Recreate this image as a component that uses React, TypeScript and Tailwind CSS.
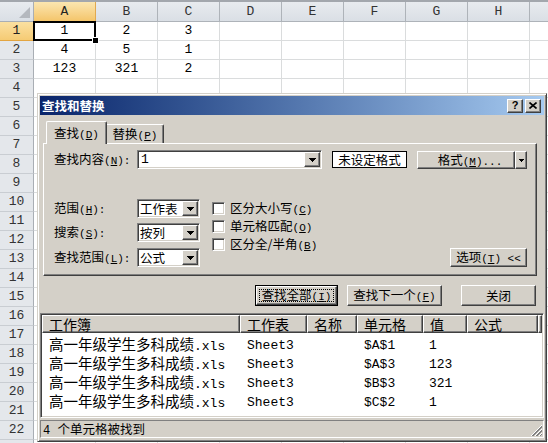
import React from 'react';

const COLS = ['A', 'B', 'C', 'D', 'E', 'F', 'G', 'H', 'I'];
const DATA: Record<number, string[]> = { 1: ['1', '2', '3'], 2: ['4', '5', '1'], 3: ['123', '321', '2'] };

const RAISED =
  'bg-[#d4d0c8] border border-t-white border-l-white border-r-[#404040] border-b-[#404040] shadow-[inset_-1px_-1px_0_#808080]';
const SUNKEN =
  'border border-t-[#808080] border-l-[#808080] border-r-white border-b-white shadow-[inset_1px_1px_0_#404040,inset_-1px_-1px_0_#d4d0c8]';
const ZH = "font-['Noto_Sans_CJK_SC',sans-serif]";
const MONO = "font-['Liberation_Mono','Noto_Sans_CJK_SC',monospace]";

const CJKRE = /([\u2E80-\u9FFF\uFF00-\uFFEF\u3000-\u303F]+)/;

function Mix({ text, c, l }: { text: string; c: string; l: string }) {
  const parts = text.split(CJKRE).filter((p) => p !== '');
  return (
    <span className="whitespace-pre">
      {parts.map((p, i) => (
        <span key={i} className={CJKRE.test(p) ? c : l}>
          {p}
        </span>
      ))}
    </span>
  );
}

function Mn({ zh, k, tail = '' }: { zh: string; k: string; tail?: string }) {
  return (
    <span className="whitespace-pre">
      <span className={`${ZH} text-[12.5px]`}>{zh}</span>
      <span className={`${MONO} text-[11px]`}>
        (<span className="underline underline-offset-1">{k}</span>){tail}
      </span>
    </span>
  );
}

function Arrow() {
  return (
    <svg width="7" height="4" viewBox="0 0 7 4" shapeRendering="crispEdges">
      <rect x="0" y="0" width="7" height="1" fill="#000" />
      <rect x="1" y="1" width="5" height="1" fill="#000" />
      <rect x="2" y="2" width="3" height="1" fill="#000" />
      <rect x="3" y="3" width="1" height="1" fill="#000" />
    </svg>
  );
}

function Select({ text }: { text: string }) {
  return (
    <div className={`${SUNKEN} bg-white w-[63px] h-[19px] flex p-[1px]`}>
      <div className={`${ZH} flex-1 min-w-0 text-[12.5px] leading-[15px] pl-[1px] whitespace-nowrap`}>{text}</div>
      <div className={`${RAISED} w-[16px] shrink-0 flex items-center justify-center`}>
        <Arrow />
      </div>
    </div>
  );
}

function Check({ zh, k }: { zh: string; k: string }) {
  return (
    <div className="flex items-center h-[18px]">
      <div className={`${SUNKEN} bg-white w-[13px] h-[13px] shrink-0`} />
      <span className="ml-[5px]">
        <Mn zh={zh} k={k} />
      </span>
    </div>
  );
}

const HEAD = [
  { t: '工作簿', w: 'w-[198px]' },
  { t: '工作表', w: 'w-[67px]' },
  { t: '名称', w: 'w-[50px]' },
  { t: '单元格', w: 'w-[66px]' },
  { t: '值', w: 'w-[44px]' },
  { t: '公式', w: 'w-[71px]' },
];

const RESULTS = [
  ['$A$1', '1'],
  ['$A$3', '123'],
  ['$B$3', '321'],
  ['$C$2', '1'],
];

export default function App() {
  const rows = Array.from({ length: 23 }, (_, i) => i + 1);
  return (
    <div className="relative w-[548px] h-[443px] overflow-hidden bg-white select-none">
      {/* Spreadsheet */}
      <div className={`${MONO} text-[13px] text-black`}>
        <div className="flex h-[22px] border-t-2 border-t-[#a3a7ad] bg-[#dfe3e8]">
          <div className="relative w-[34px] shrink-0 h-full border-r border-b border-[#a9aeb4] bg-linear-to-b from-[#e8ebef] to-[#dadfe5]">
            <svg className="absolute right-[2px] bottom-[2px]" width="12" height="12">
              <polygon points="11,0 11,11 0,11" fill="#b4b8be" />
            </svg>
          </div>
          {COLS.map((c) => (
            <div
              key={c}
              className={
                c === 'A'
                  ? 'w-[62px] shrink-0 h-full flex items-center justify-center border-r border-b border-r-[#e1a94f] border-b-[#e3a541] bg-linear-to-b from-[#fbe6b0] to-[#f4c56a] text-[#222]'
                  : 'w-[62px] shrink-0 h-full flex items-center justify-center border-r border-b border-[#aeb3b9] bg-linear-to-b from-[#e8ebef] to-[#dadfe5] text-[#333]'
              }
            >
              {c === 'I' ? '' : c}
            </div>
          ))}
        </div>
        {rows.map((r) => (
          <div key={r} className="flex h-[19px]">
            <div
              className={
                r === 1
                  ? 'w-[34px] shrink-0 h-full flex items-center justify-center border-r border-b border-r-[#e1a94f] border-b-[#e3a541] bg-linear-to-b from-[#fbe0a0] to-[#f5cb74] text-[#222]'
                  : 'w-[34px] shrink-0 h-full flex items-center justify-center border-r border-b border-r-[#a9aeb4] border-b-[#c9cdd2] bg-[#e4e7eb] text-[#333]'
              }
            >
              {r <= 22 ? r : ''}
            </div>
            {COLS.map((c, ci) => (
              <div
                key={c}
                className="w-[62px] shrink-0 h-full flex items-center justify-center border-r border-b border-[#dadcdd]"
              >
                {DATA[r]?.[ci] ?? ''}
              </div>
            ))}
          </div>
        ))}
      </div>
      {/* Active cell */}
      <div className="absolute left-[33px] top-[21px] w-[63px] h-[20px] border-2 border-black" />
      <div className="absolute left-[92px] top-[37px] w-[7px] h-[7px] bg-black border border-white" />

      {/* Dialog */}
      <div className="absolute left-[37px] top-[93px] w-[510px] h-[349px] bg-[#d4d0c8] border border-t-[#d4d0c8] border-l-[#d4d0c8] border-r-[#404040] border-b-[#404040] shadow-[inset_1px_1px_0_#fff,inset_-1px_-1px_0_#808080] p-[2px] flex flex-col text-black leading-[16px]">
        {/* Title bar */}
        <div className="h-[19px] shrink-0 flex items-center bg-linear-to-r from-[#0a246a] to-[#a6caf0] pl-[2px] pr-[3px]">
          <span className={`${ZH} text-[12.5px] font-bold text-white`}>查找和替换</span>
          <div className="ml-auto flex gap-[2px]">
            <div className={`${RAISED} w-[16px] h-[14px] flex items-center justify-center`}>
              <span className="font-['Liberation_Sans',sans-serif] font-bold text-[11px] leading-none">?</span>
            </div>
            <div className={`${RAISED} w-[16px] h-[14px] flex items-center justify-center`}>
              <svg width="8" height="7" viewBox="0 0 8 7">
                <path d="M0.5 0.5L7.5 6.5M7.5 0.5L0.5 6.5" stroke="#000" strokeWidth="1.6" />
              </svg>
            </div>
          </div>
        </div>

        {/* Tabs */}
        <div className="mt-[6px] ml-[3px] w-[494px] h-[22px] flex items-end pl-[3px]">
          <div className="relative z-10 -mb-px w-[61px] h-[23px] bg-[#d4d0c8] border-t border-l border-r border-t-white border-l-white border-r-[#404040] rounded-t-[2px] shadow-[inset_-1px_0_0_#808080] flex items-center justify-center">
            <Mn zh="查找" k="D" />
          </div>
          <div className="w-[57px] h-[19px] bg-[#d4d0c8] border-t border-r border-t-white border-r-[#404040] rounded-tr-[2px] shadow-[inset_-1px_0_0_#808080] flex items-center justify-center">
            <Mn zh="替换" k="P" />
          </div>
        </div>

        {/* Panel */}
        <div className="ml-[3px] w-[494px] h-[133px] shrink-0 border border-t-white border-l-white border-r-[#404040] border-b-[#404040] shadow-[inset_-1px_-1px_0_#808080] pl-[10px] pr-[9px] pt-[6px] flex flex-col">
          <div className="flex items-start h-[19px]">
            <div className="w-[83px] h-[19px] flex items-center">
              <Mn zh="查找内容" k="N" tail=":" />
            </div>
            <div className={`${SUNKEN} bg-white w-[185px] h-[19px] flex p-[1px]`}>
              <div className={`${MONO} flex-1 text-[13px] leading-[15px] pl-[2px]`}>1</div>
              <div className={`${RAISED} w-[16px] flex items-center justify-center`}>
                <Arrow />
              </div>
            </div>
            <div className={`${ZH} ml-[10px] mt-[1px] w-[75px] h-[17px] border border-black bg-white flex items-center justify-center text-[12.5px]`}>
              未设定格式
            </div>
            <div className="ml-[10px] mt-[1px] flex h-[18px]">
              <div className={`${RAISED} w-[98px] h-full flex items-center justify-center pl-[8px]`}>
                <Mn zh="格式" k="M" tail="..." />
              </div>
              <div className={`${RAISED} w-[12px] h-full flex items-center justify-center`}>
                <svg width="5" height="3" viewBox="0 0 5 3" shapeRendering="crispEdges">
                  <rect x="0" y="0" width="5" height="1" fill="#000" />
                  <rect x="1" y="1" width="3" height="1" fill="#000" />
                  <rect x="2" y="2" width="1" height="1" fill="#000" />
                </svg>
              </div>
            </div>
          </div>

          <div className="mt-[30px] flex items-end">
            <div className="flex flex-col">
              <div className="flex items-center h-[19px]">
                <div className="w-[83px]">
                  <Mn zh="范围" k="H" tail=":" />
                </div>
                <Select text="工作表" />
              </div>
              <div className="flex items-center h-[19px] mt-[5px]">
                <div className="w-[83px]">
                  <Mn zh="搜索" k="S" tail=":" />
                </div>
                <Select text="按列" />
              </div>
              <div className="flex items-center h-[19px] mt-[6px]">
                <div className="w-[83px]">
                  <Mn zh="查找范围" k="L" tail=":" />
                </div>
                <Select text="公式" />
              </div>
            </div>
            <div className="ml-[12px] self-start flex flex-col">
              <Check zh="区分大小写" k="C" />
              <Check zh="单元格匹配" k="O" />
              <Check zh="区分全/半角" k="B" />
            </div>
            <div className={`${RAISED} ml-auto w-[77px] h-[19px] flex items-center justify-center`}>
              <Mn zh="选项" k="T" tail=" <<" />
            </div>
          </div>
        </div>

        {/* Buttons */}
        <div className="mt-[9px] h-[21px] flex justify-end pr-[8px]">
          <div className="w-[83px] h-full border border-black">
            <div className={`${RAISED} w-full h-full flex items-center justify-center outline-1 outline-dotted outline-black outline-offset-[-4px]`}>
              <Mn zh="查找全部" k="I" />
            </div>
          </div>
          <div className={`${RAISED} ml-[9px] w-[95px] h-full flex items-center justify-center`}>
            <Mn zh="查找下一个" k="F" />
          </div>
          <div className={`${RAISED} ml-[19px] w-[75px] h-full flex items-center justify-center`}>
            <span className={`${ZH} text-[12.5px]`}>关闭</span>
          </div>
        </div>

        {/* Results list */}
        <div className={`${SUNKEN} mt-[7px] h-[105px] bg-white p-[1px] flex flex-col`}>
          <div className="flex h-[18px] shrink-0 bg-[#d4d0c8]">
            {HEAD.map((h) => (
              <div
                key={h.t}
                className={`${h.w} ${RAISED} ${ZH} shrink-0 h-full flex items-center pl-[6px] text-[14px]`}
              >
                {h.t}
              </div>
            ))}
            <div className={`${RAISED} flex-1 h-full`} />
          </div>
          <div className="pt-[3px]">
            {RESULTS.map(([cell, val], i) => (
              <div key={i} className="flex h-[19px] items-center whitespace-nowrap">
                <div className="w-[198px] shrink-0 pl-[7px]">
                  <Mix
                    text="高一年级学生多科成绩.xls"
                    c="font-['Noto_Sans_CJK_SC',sans-serif] text-[14.5px]"
                    l="font-['Liberation_Mono',monospace] text-[13px]"
                  />
                </div>
                <div className={`${MONO} w-[67px] shrink-0 pl-[7px] text-[13px]`}>Sheet3</div>
                <div className="w-[50px] shrink-0" />
                <div className={`${MONO} w-[66px] shrink-0 pl-[7px] text-[13px]`}>{cell}</div>
                <div className={`${MONO} w-[44px] shrink-0 pl-[6px] text-[13px]`}>{val}</div>
                <div className="w-[71px] shrink-0" />
              </div>
            ))}
          </div>
        </div>

        {/* Status bar */}
        <div className="mt-[2px] h-[18px] flex items-center border border-t-[#808080] border-l-[#808080] border-r-white border-b-white pl-[2px]">
          <Mix
            text="4 个单元格被找到"
            c="font-['Noto_Sans_CJK_SC',sans-serif] text-[12.5px]"
            l="font-['Liberation_Mono',monospace] text-[12px]"
          />
          <svg className="ml-auto self-end" width="12" height="12" viewBox="0 0 12 12" shapeRendering="crispEdges">
            <path d="M11 1L1 11" stroke="#808080" strokeWidth="1" />
            <path d="M11 2L2 11" stroke="#808080" strokeWidth="1" />
            <path d="M11 0L0 11" stroke="#ffffff" strokeWidth="1" />
            <path d="M11 5L5 11" stroke="#808080" strokeWidth="1" />
            <path d="M11 6L6 11" stroke="#808080" strokeWidth="1" />
            <path d="M11 4L4 11" stroke="#ffffff" strokeWidth="1" />
            <path d="M11 9L9 11" stroke="#808080" strokeWidth="1" />
            <path d="M11 8L8 11" stroke="#ffffff" strokeWidth="1" />
          </svg>
        </div>
      </div>
    </div>
  );
}
